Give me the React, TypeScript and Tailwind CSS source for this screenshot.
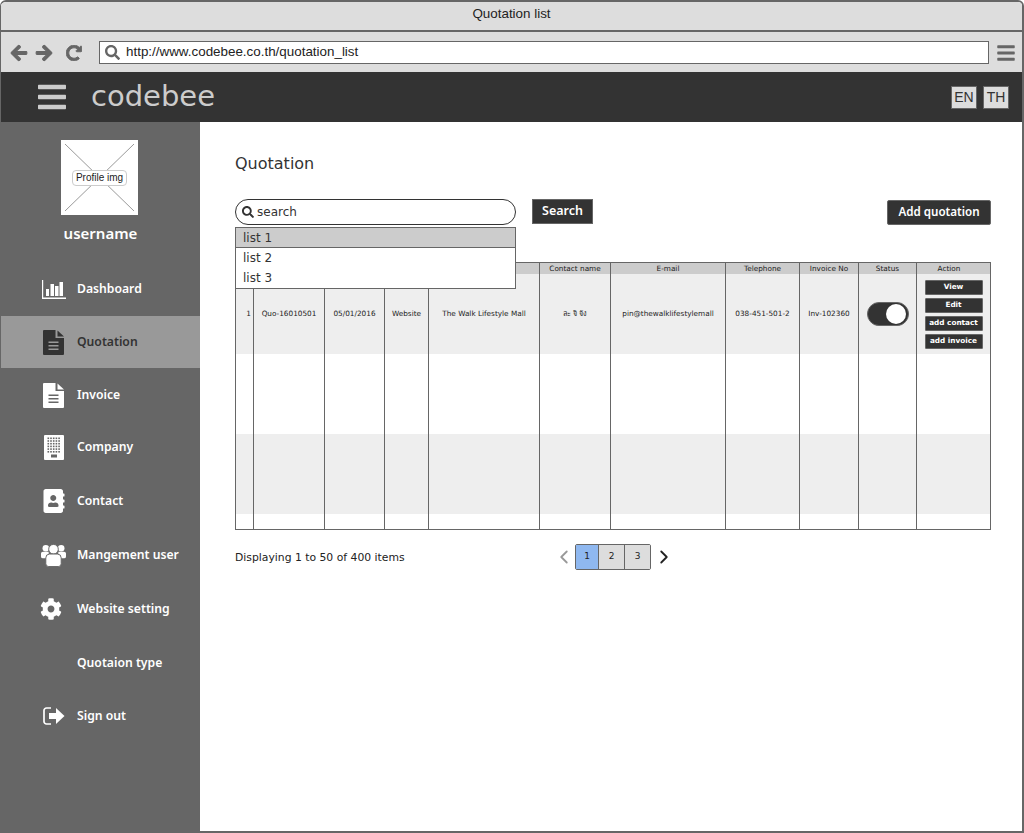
import { FaAddressBook, FaArrowLeft, FaArrowRight, FaBars, FaCog, FaRedoAlt, FaSearch } from 'react-icons/fa';
import { ChevronLeft, ChevronRight } from 'lucide-react';
import type { ReactNode } from 'react';

function ChartIcon() {
  return (
    <svg width="24" height="19" viewBox="0 0 24 19" fill="currentColor">
      <path d="M0 0h1.2v17.6H24V19H0z" />
      <rect x="4" y="9" width="3" height="7" />
      <rect x="8.5" y="4" width="3.5" height="12" />
      <rect x="13" y="6" width="3.5" height="10" />
      <rect x="17.5" y="2" width="3.5" height="14" />
    </svg>
  );
}

function FileIcon({ lines }: { lines: string }) {
  return (
    <svg width="21" height="25" viewBox="0 0 21 25">
      <path d="M1 0h11.5v8H21v16a1 1 0 0 1-1 1H1a1 1 0 0 1-1-1V1a1 1 0 0 1 1-1z" fill="currentColor" />
      <path d="M14.5 0.5L21 6.5h-6.5z" fill="currentColor" />
      <path d="M5.5 11.5h10v1.6h-10zM5.5 15h10v1.6h-10zM5.5 18.5h10v1.6h-10z" fill={lines} />
    </svg>
  );
}

function BuildingIcon() {
  const cells = [];
  for (let r = 0; r < 6; r++) {
    for (let c = 0; c < 5; c++) {
      cells.push(<rect key={`${r}-${c}`} x={3.5 + c * 2.7} y={2.5 + r * 2.7} width="1.6" height="1.6" fill="#666666" />);
    }
  }
  return (
    <svg width="20" height="25" viewBox="0 0 20 25">
      <rect width="20" height="25" rx="1" fill="currentColor" />
      {cells}
      <rect x="7" y="19.5" width="6" height="3" fill="#666666" />
    </svg>
  );
}

function UsersIcon() {
  return (
    <svg width="26" height="24" viewBox="0 0 26 24" fill="currentColor">
      <circle cx="5" cy="5" r="3.4" />
      <circle cx="21" cy="5" r="3.4" />
      <path d="M0 10.5a2 2 0 0 1 2-2h6v7H2a2 2 0 0 1-2-2zM26 10.5a2 2 0 0 0-2-2h-6v7h6a2 2 0 0 0 2-2z" />
      <circle cx="13" cy="6" r="5" stroke="#666666" strokeWidth="1" />
      <path d="M5 15a4 4 0 0 1 4-4h8a4 4 0 0 1 4 4v6a3 3 0 0 1-3 3H8a3 3 0 0 1-3-3z" stroke="#666666" strokeWidth="1" />
    </svg>
  );
}

function SignOutIcon() {
  return (
    <svg width="22" height="18" viewBox="0 0 22 18" fill="currentColor">
      <path d="M8 1H3.5a2.5 2.5 0 0 0-2.5 2.5v11A2.5 2.5 0 0 0 3.500 17H8" fill="none" stroke="currentColor" strokeWidth="1.7" />
      <path d="M6 6h7V1l8.500 8-8.500 8v-5H6z" />
    </svg>
  );
}

type NavItem = { label: string; icon: ReactNode; height: string; active?: boolean };

const navItems: NavItem[] = [
  { label: 'Dashboard', icon: <ChartIcon />, height: 'h-[54px]' },
  { label: 'Quotation', icon: <FileIcon lines="#999999" />, height: 'h-[52px]', active: true },
  { label: 'Invoice', icon: <FileIcon lines="#666666" />, height: 'h-[54px]' },
  { label: 'Company', icon: <BuildingIcon />, height: 'h-[50px]' },
  { label: 'Contact', icon: <FaAddressBook size={24} />, height: 'h-[58px]' },
  { label: 'Mangement user', icon: <UsersIcon />, height: 'h-[50px]' },
  { label: 'Website setting', icon: <FaCog size={22} className="-translate-x-[3px]" />, height: 'h-[58px]' },
  { label: 'Quotaion type', icon: null, height: 'h-[50px]' },
  { label: 'Sign out', icon: <SignOutIcon />, height: 'h-[56px]' },
];

const colWidths = ['w-[18px]', 'w-[71px]', 'w-[60px]', 'w-[44px]', 'w-[111px]', 'w-[71px]', 'w-[115px]', 'w-[74px]', 'w-[59px]', 'w-[58px]', 'w-[74px]'];

const headers = ['', '', '', '', '', 'Contact name', 'E-mail', 'Telephone', 'Invoice No', 'Status'];

const firstRow = ['Quo-16010501', '05/01/2016', 'Website', 'The Walk Lifestyle Mall', 'ละ จิ จัง', 'pin@thewalklifestylemall', '038-451-501-2', 'Inv-102360'];

const actions = ['View', 'Edit', 'add contact', 'add invoice'];

function BlankRow({ className }: { className: string }) {
  return (
    <tr className={className}>
      {colWidths.map((w) => (
        <td key={w} className="border-x border-[#666666]" />
      ))}
    </tr>
  );
}

export default function App() {
  return (
    <div className="w-[1024px] h-[833px] flex flex-col overflow-hidden border-2 border-l border-[#666666] rounded-t-md bg-white font-['DejaVu_Sans',sans-serif] text-[#333333]">
      <div className="h-[30px] shrink-0 pb-[3px] flex items-center justify-center bg-[#dddddd] border-b-2 border-[#666666] font-['Liberation_Sans',sans-serif] text-[13.4px] text-[#222222]">
        Quotation list
      </div>
      <div className="h-[40px] shrink-0 pt-[1px] flex items-center bg-[#dddddd] pl-[9px] text-[#666666]">
        <FaArrowLeft size={18} stroke="currentColor" strokeWidth={30} />
        <FaArrowRight size={18} stroke="currentColor" strokeWidth={30} className="ml-[7px]" />
        <FaRedoAlt size={16} stroke="currentColor" strokeWidth={30} className="ml-[13px]" />
        <div className="ml-[17px] w-[890px] h-[23px] flex items-center gap-[6px] bg-white border border-[#666666] px-[5px]">
          <FaSearch size={15} />
          <span className="font-['Liberation_Sans',sans-serif] text-[13.4px] text-[#222222]">http://www.codebee.co.th/quotation_list</span>
        </div>
        <FaBars size={20} className="ml-[7px]" />
      </div>
      <div className="h-[50px] shrink-0 flex items-center bg-[#333333] pl-[35px] pr-[13px]">
        <FaBars size={32} className="text-[#cccccc]" />
        <span className="ml-[23px] text-[29px] text-[#cccccc]">codebee</span>
        <div className="ml-auto flex gap-[6px] font-['Liberation_Sans',sans-serif] text-[14px]">
          <span className="w-[26px] h-[23px] flex items-center justify-center bg-[#dddddd] border border-[#666666]">EN</span>
          <span className="w-[26px] h-[23px] flex items-center justify-center bg-[#dddddd] border border-[#666666]">TH</span>
        </div>
      </div>
      <div className="flex-1 flex min-h-0">
        <aside className="w-[199px] shrink-0 bg-[#666666] flex flex-col text-white font-['Noto_Sans',sans-serif]">
          <div className="mt-[18px] ml-[60px] w-[77px] h-[75px] relative bg-white flex items-center justify-center">
            <svg className="absolute inset-[4px]" width="69" height="67" viewBox="0 0 69 67">
              <path d="M0 0L69 67M69 0L0 67" stroke="#999999" strokeWidth="1" />
            </svg>
            <span className="relative w-[55px] h-[16px] flex items-center justify-center rounded-[4px] border border-[#cccccc] bg-white text-[10px] text-[#222222] font-['Liberation_Sans',sans-serif]">Profile img</span>
          </div>
          <div className="mt-[6px] h-[24px] flex items-center justify-center text-[15px] font-semibold">username</div>
          <nav className="mt-[17px] flex flex-col">
            {navItems.map((item) => (
              <div
                key={item.label}
                className={`${item.height} flex items-center ${item.active ? 'bg-[#999999] text-[#333333]' : ''}`}
              >
                <span className="w-[25px] ml-[40px] flex justify-center">{item.icon}</span>
                <span className="ml-[11px] text-[12.2px] font-semibold">{item.label}</span>
              </div>
            ))}
          </nav>
        </aside>
        <main className="flex-1 min-w-0 pl-[35px] pr-[31px]">
          <h1 className="mt-[31px] h-[22px] flex items-center text-[16px]">Quotation</h1>
          <div className="relative mt-[24px] flex items-start">
            <div className="w-[281px] h-[26px] flex items-center gap-[3px] pl-[6px] rounded-full border border-[#333333] text-[12px]">
              <FaSearch size={12} className="shrink-0" />
              search
            </div>
            <button type="button" className="ml-[16px] w-[61px] h-[25px] bg-[#333333] border border-[#666666] text-white text-[12.5px] font-semibold font-['Noto_Sans',sans-serif]">Search</button>
            <button type="button" className="ml-auto mt-[1px] w-[104px] h-[25px] pb-[1px] bg-[#333333] border border-[#666666] rounded-[2px] text-white text-[11.6px] font-semibold font-['Noto_Sans',sans-serif]">Add quotation</button>
            <ul className="absolute z-10 left-0 top-[28px] w-[281px] h-[62px] bg-white border border-[#666666] text-[12px]">
              <li className="h-[20px] pl-[7px] flex items-center bg-[#cccccc] border-b border-[#666666]">list 1</li>
              <li className="h-[20px] pl-[7px] flex items-center">list 2</li>
              <li className="h-[20px] pl-[7px] flex items-center">list 3</li>
            </ul>
          </div>
          <table className="mt-[37px] w-[755px] h-[268px] table-fixed border-collapse border border-[#666666] text-[7.3px] text-center text-[#222222]">
            <colgroup>
              {colWidths.map((w) => (
                <col key={w} className={w} />
              ))}
            </colgroup>
            <thead>
              <tr className="h-[11px] bg-[#cccccc]">
                {headers.map((h, i) => (
                  <th key={i} className="border-x border-[#666666] font-normal leading-[11px]">{h}</th>
                ))}
                <th className="border-x border-[#666666] font-normal leading-[11px] pr-[9px]">Action</th>
              </tr>
            </thead>
            <tbody>
              <tr className="h-[80px] bg-[#eeeeee]">
                <td className="border-x border-[#666666] pt-[1px] pr-[2px] text-right">1</td>
                {firstRow.map((v) => (
                  <td key={v} className="border-x border-[#666666] p-0 pt-[1px] whitespace-nowrap overflow-hidden">{v}</td>
                ))}
                <td className="border-x border-[#666666]">
                  <div className="mx-auto w-[42px] h-[24px] rounded-full bg-[#333333] border border-[#666666] flex items-center justify-end pr-[2px]">
                    <span className="w-[20px] h-[20px] rounded-full bg-white" />
                  </div>
                </td>
                <td className="border-x border-[#666666]">
                  <div className="flex flex-col items-center gap-[3px]">
                    {actions.map((a) => (
                      <button key={a} type="button" className="w-[58px] h-[15px] bg-[#333333] border border-[#666666] rounded-[1px] text-white font-semibold leading-none">{a}</button>
                    ))}
                  </div>
                </td>
              </tr>
              <BlankRow className="h-[80px] bg-white" />
              <BlankRow className="h-[80px] bg-[#eeeeee]" />
              <BlankRow className="h-[15px] bg-white" />
            </tbody>
          </table>
          <div className="mt-[14px] h-[26px] flex items-center text-[10.8px] text-[#222222]">
            <span className="w-[318px] pt-[2px]">Displaying 1 to 50 of 400 items</span>
            <ChevronLeft size={22} strokeWidth={2} className="text-[#999999]" />
            <div className="h-[26px] flex border border-[#666666] rounded-[2px] text-[9px]">
              <span className="w-[23px] flex items-center justify-center bg-[#8fb8f0] border-r border-[#666666]">1</span>
              <span className="w-[26px] flex items-center justify-center bg-[#dddddd] border-r border-[#666666]">2</span>
              <span className="w-[25px] flex items-center justify-center bg-[#dddddd]">3</span>
            </div>
            <ChevronRight size={22} strokeWidth={2} className="ml-[2px] text-[#222222]" />
          </div>
        </main>
      </div>
    </div>
  );
}
